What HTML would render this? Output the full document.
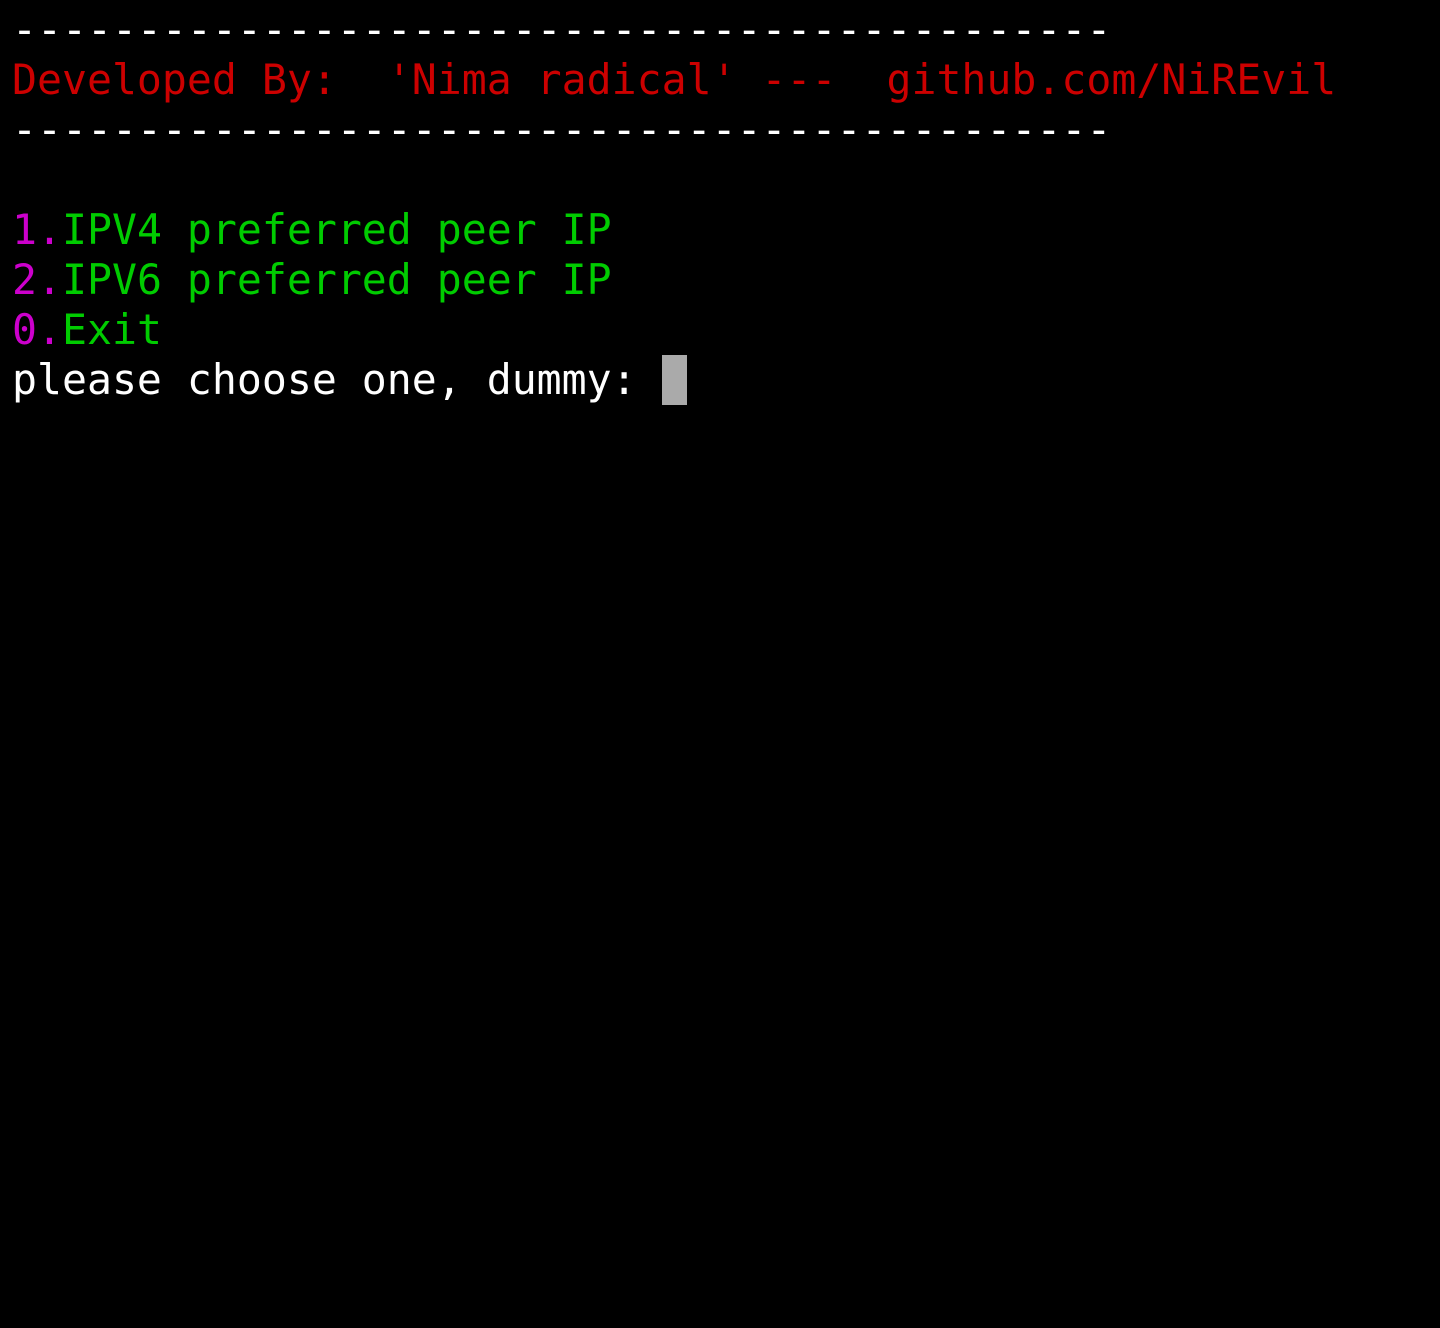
<!DOCTYPE html>
<html><head><meta charset="utf-8"><style>
html,body{margin:0;padding:0;background:#000;width:1440px;height:1328px;overflow:hidden}
pre{margin:0;position:absolute;left:12px;top:5px;font-family:"DejaVu Sans Mono","Liberation Mono",monospace;font-size:41.5px;line-height:50px;color:#fff;white-space:pre}
.r{color:#cc0000}.g{color:#00cc00}.m{color:#cc00cc}
.cur{display:inline-block;width:25px;height:50px;background:#aaa;vertical-align:top}
</style></head><body>
<pre>--------------------------------------------
<span class="r">Developed By:  'Nima radical' ---  github.com/NiREvil</span>
--------------------------------------------

<span class="m">1.</span><span class="g">IPV4 preferred peer IP</span>
<span class="m">2.</span><span class="g">IPV6 preferred peer IP</span>
<span class="m">0.</span><span class="g">Exit</span>
please choose one, dummy: <span class="cur"></span></pre>
</body></html>
